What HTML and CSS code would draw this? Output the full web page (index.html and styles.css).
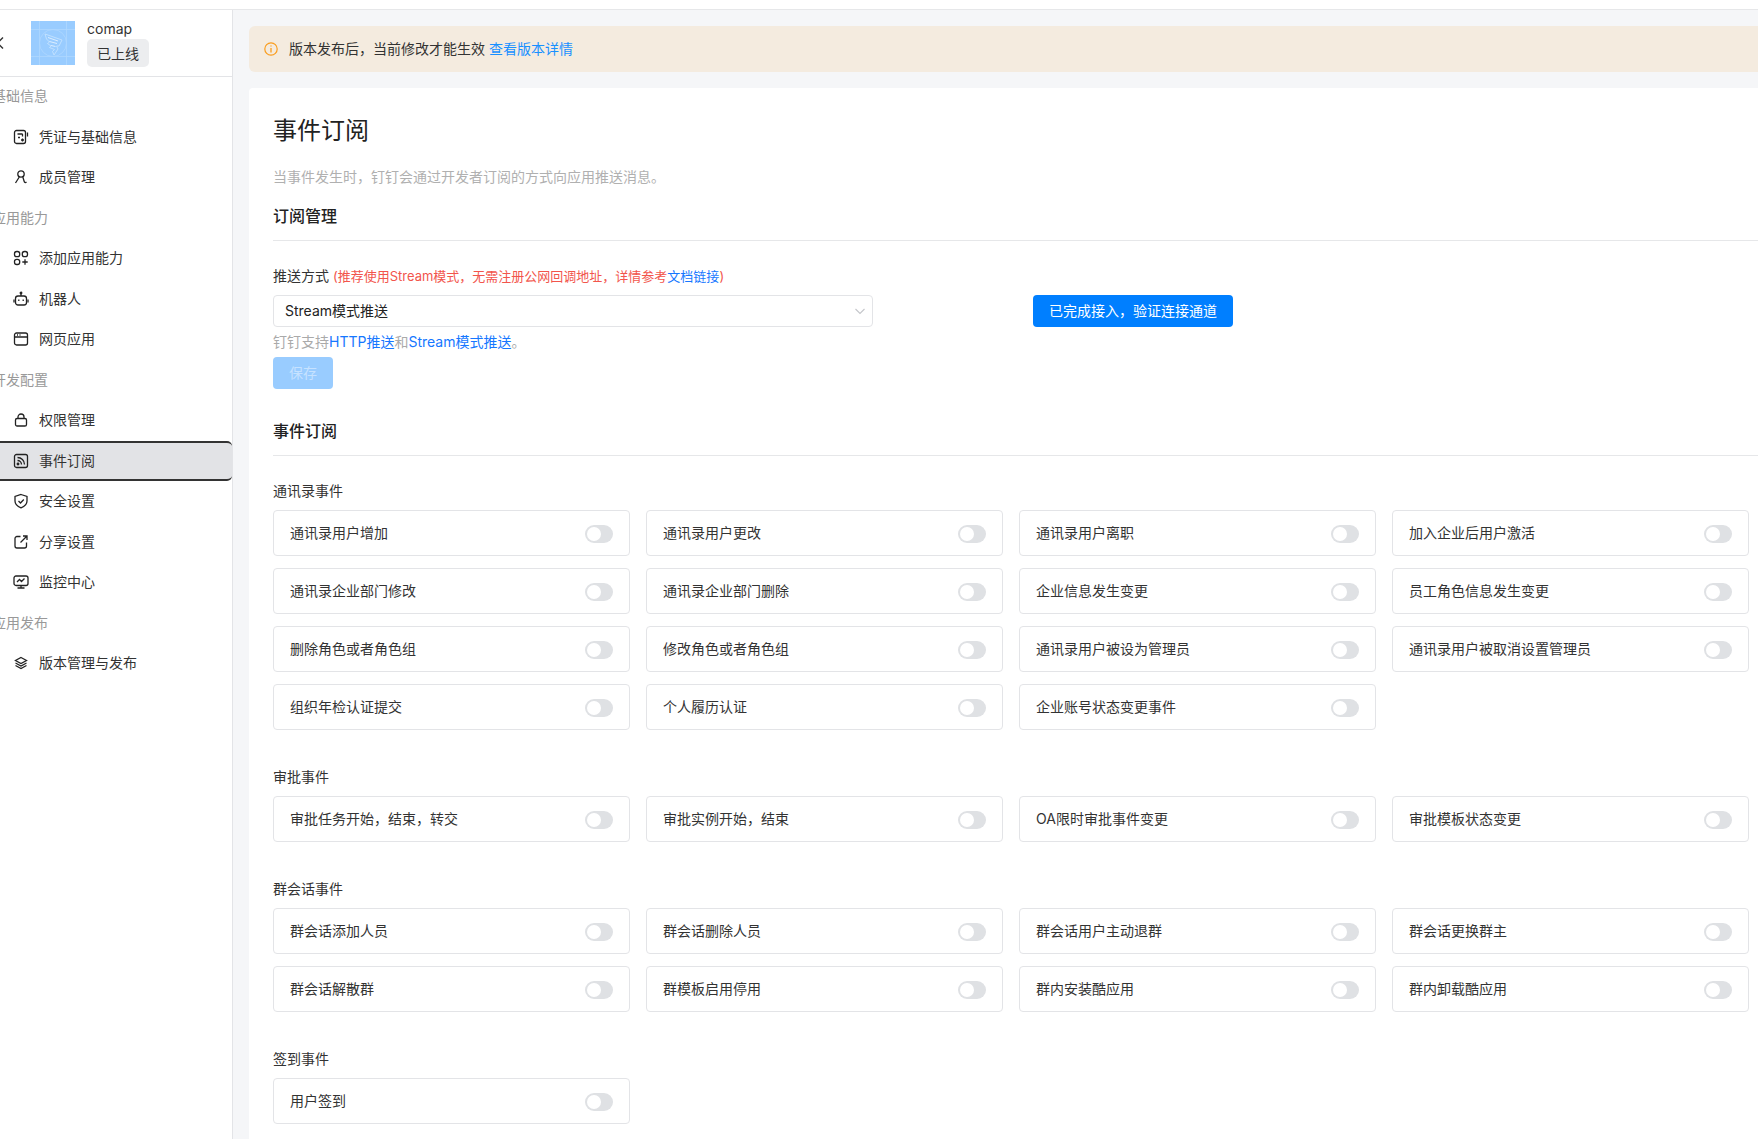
FILE: index.html
```html
<!DOCTYPE html>
<html lang="zh-CN">
<head>
<meta charset="utf-8">
<title>事件订阅</title>
<link rel="stylesheet" href="styles.css">
</head>
<body>
<div class="topbar"></div>
<div class="layout">
  <aside class="sidebar">
    <div class="app-head">
      <svg class="back" width="12" height="14" viewBox="0 0 12 14"><path d="M9 1.500 3.500 7 9 12.500" fill="none" stroke="#333" stroke-width="1.400"/></svg>
      <svg class="logo" width="44" height="44" viewBox="0 0 44 44">
        <rect width="44" height="44" fill="#99ccff"/>
        <path d="M0 8.500H44M0 35.500H44M8.500 0V44M35.500 0V44" stroke="#aed7ff" stroke-width=".8"/>
        <circle cx="22" cy="22" r="13.500" fill="none" stroke="#aed7ff" stroke-width=".8"/>
        <path d="M14 13 31 19 28 25 25.500 25 27 28 23 34 21.500 30.500 23.500 28.500 18.500 26.500 20 25 16.500 22.500 18.500 21 15.500 18Z" fill="none" stroke="#c4e2ff" stroke-width=".9"/>
        <path d="M17 16.500 27 20M18.500 20.500 26 22.500M20 24.500 24.500 25.500" fill="none" stroke="#dceeff" stroke-width="1"/>
      </svg>
      <div class="app-meta">
        <div class="app-name">comap</div>
        <span class="badge">已上线</span>
      </div>
    </div>
    <nav class="menu">
      <div class="menu-label">基础信息</div>
      <a class="menu-item"><svg class="ico" viewBox="0 0 16 16"><rect x="1.500" y="1.500" width="11" height="13" rx="2"/><path d="M14.500 3.500v4M4.500 5h4.500l.5.500v2M5 8.500h2M9.500 9.500v3M8 11h3"/></svg>凭证与基础信息</a>
      <a class="menu-item"><svg class="ico" viewBox="0 0 16 16"><circle cx="8" cy="5" r="3.200"/><path d="M6.300 8 2.500 14M9.800 8l1.500 4.800c.3.900 1.300 1 2.200.2"/></svg>成员管理</a>
      <div class="menu-label">应用能力</div>
      <a class="menu-item"><svg class="ico" viewBox="0 0 16 16"><rect x="1.500" y="1.500" width="5.200" height="5.200" rx="2.200"/><rect x="9.300" y="1.500" width="5.200" height="5.200" rx="2.200"/><rect x="1.500" y="9.300" width="5.200" height="5.200" rx="2.200"/><path d="M12 9.300v5.400M9.300 12h5.400"/></svg>添加应用能力</a>
      <a class="menu-item"><svg class="ico" viewBox="0 0 16 16"><rect x="2.500" y="5" width="11" height="9" rx="2.500"/><path d="M8 5V2.500M1 8.500v3M15 8.500v3"/><circle cx="8" cy="2" r=".8"/><path d="M5.800 8.500v1.500M10.200 8.500v1.500"/></svg>机器人</a>
      <a class="menu-item"><svg class="ico" viewBox="0 0 16 16"><rect x="1.500" y="2" width="13" height="12" rx="2"/><path d="M1.500 6h13M4 4h1M6.500 4h1"/></svg>网页应用</a>
      <div class="menu-label">开发配置</div>
      <a class="menu-item"><svg class="ico" viewBox="0 0 16 16"><rect x="2.500" y="6.500" width="11" height="7.500" rx="1.600"/><path d="M5 6.500V5a3 3 0 0 1 6 0v1.500"/></svg>权限管理</a>
      <a class="menu-item active"><svg class="ico" viewBox="0 0 16 16"><rect x="1.500" y="1.500" width="13" height="13" rx="2"/><path d="M4.500 4.500a7 7 0 0 1 7 7M4.500 7.500a4 4 0 0 1 4 4"/><circle cx="5" cy="11" r=".8"/></svg>事件订阅</a>
      <a class="menu-item"><svg class="ico" viewBox="0 0 16 16"><path d="M8 1.500 14 3.500V8c0 3.500-2.500 5.500-6 6.800C4.500 13.500 2 11.500 2 8V3.500Z"/><path d="M5.500 8 7.500 10 10.800 6.500"/></svg>安全设置</a>
      <a class="menu-item"><svg class="ico" viewBox="0 0 16 16"><path d="M7.500 2.500H4a2 2 0 0 0-2 2V12a2 2 0 0 0 2 2h7.500a2 2 0 0 0 2-2V8.500"/><path d="M7.500 8.500 14 2M10 2h4v4"/></svg>分享设置</a>
      <a class="menu-item"><svg class="ico" viewBox="0 0 16 16"><rect x="1" y="2" width="14" height="9.500" rx="2"/><path d="M4 8 6.500 5.500 8.500 7.500 11.500 4.500M8 11.500v2.500M4.500 14h7"/></svg>监控中心</a>
      <div class="menu-label">应用发布</div>
      <a class="menu-item"><svg class="ico" viewBox="0 0 16 16"><path d="M8 2.500 13.500 5.500 8 8.500 2.500 5.500Z"/><path d="M2.500 8 8 11 13.500 8M2.500 10.500 8 13.500 13.500 10.500"/></svg>版本管理与发布</a>
    </nav>
  </aside>
  <main class="main">
    <div class="alert">
      <svg class="alert-ico" width="14" height="14" viewBox="0 0 14 14"><circle cx="7" cy="7" r="6.200" fill="none" stroke="#fa9d1e" stroke-width="1.200"/><path d="M7 3.500v.9M7 6v4.500" stroke="#fa9d1e" stroke-width="1.300" fill="none"/></svg>
      <span>版本发布后，当前修改才能生效</span>
      <a class="alert-link">查看版本详情</a>
    </div>
    <section class="panel">
      <h1 class="page-title">事件订阅</h1>
      <p class="page-desc">当事件发生时，钉钉会通过开发者订阅的方式向应用推送消息。</p>
      <h2 class="section-title first">订阅管理</h2>
      <div class="form-label">推送方式 <span class="hint">(推荐使用Stream模式，无需注册公网回调地址，详情参考<a class="link">文档链接</a>)</span></div>
      <div class="form-row">
        <div class="select">
          <span>Stream模式推送</span>
          <svg width="12" height="12" viewBox="0 0 12 12"><path d="M1.500 4 6 8.500 10.500 4" fill="none" stroke="#c4c6ca" stroke-width="1.100"/></svg>
        </div>
        <button class="btn-primary">已完成接入，验证连接通道</button>
      </div>
      <div class="help">钉钉支持<a class="link">HTTP推送</a>和<a class="link">Stream模式推送</a>。</div>
      <button class="btn-save">保存</button>
      <h2 class="section-title">事件订阅</h2>

      <div class="group">
        <div class="group-title">通讯录事件</div>
        <div class="event-grid">
          <div class="event"><span>通讯录用户增加</span><i class="toggle"></i></div>
          <div class="event"><span>通讯录用户更改</span><i class="toggle"></i></div>
          <div class="event"><span>通讯录用户离职</span><i class="toggle"></i></div>
          <div class="event"><span>加入企业后用户激活</span><i class="toggle"></i></div>
          <div class="event"><span>通讯录企业部门修改</span><i class="toggle"></i></div>
          <div class="event"><span>通讯录企业部门删除</span><i class="toggle"></i></div>
          <div class="event"><span>企业信息发生变更</span><i class="toggle"></i></div>
          <div class="event"><span>员工角色信息发生变更</span><i class="toggle"></i></div>
          <div class="event"><span>删除角色或者角色组</span><i class="toggle"></i></div>
          <div class="event"><span>修改角色或者角色组</span><i class="toggle"></i></div>
          <div class="event"><span>通讯录用户被设为管理员</span><i class="toggle"></i></div>
          <div class="event"><span>通讯录用户被取消设置管理员</span><i class="toggle"></i></div>
          <div class="event"><span>组织年检认证提交</span><i class="toggle"></i></div>
          <div class="event"><span>个人履历认证</span><i class="toggle"></i></div>
          <div class="event"><span>企业账号状态变更事件</span><i class="toggle"></i></div>
        </div>
      </div>

      <div class="group">
        <div class="group-title">审批事件</div>
        <div class="event-grid">
          <div class="event"><span>审批任务开始，结束，转交</span><i class="toggle"></i></div>
          <div class="event"><span>审批实例开始，结束</span><i class="toggle"></i></div>
          <div class="event"><span>OA限时审批事件变更</span><i class="toggle"></i></div>
          <div class="event"><span>审批模板状态变更</span><i class="toggle"></i></div>
        </div>
      </div>

      <div class="group">
        <div class="group-title">群会话事件</div>
        <div class="event-grid">
          <div class="event"><span>群会话添加人员</span><i class="toggle"></i></div>
          <div class="event"><span>群会话删除人员</span><i class="toggle"></i></div>
          <div class="event"><span>群会话用户主动退群</span><i class="toggle"></i></div>
          <div class="event"><span>群会话更换群主</span><i class="toggle"></i></div>
          <div class="event"><span>群会话解散群</span><i class="toggle"></i></div>
          <div class="event"><span>群模板启用停用</span><i class="toggle"></i></div>
          <div class="event"><span>群内安装酷应用</span><i class="toggle"></i></div>
          <div class="event"><span>群内卸载酷应用</span><i class="toggle"></i></div>
        </div>
      </div>

      <div class="group">
        <div class="group-title">签到事件</div>
        <div class="event-grid">
          <div class="event"><span>用户签到</span><i class="toggle"></i></div>
        </div>
      </div>
    </section>
  </main>
</div>
</body>
</html>
```
FILE: styles.css
```css
* { box-sizing: border-box; }
html, body { margin: 0; height: 100%; overflow: hidden; }
body {
  font-family: Inter, "Noto Sans CJK SC", sans-serif;
  font-size: 14px;
  line-height: 22px;
  color: #333;
  background: #f5f6f8;
}
a { color: inherit; text-decoration: none; }

.topbar { height: 10px; background: #fff; border-bottom: 1px solid #e6e7e9; }
.layout { display: flex; height: 1129px; }

.sidebar { width: 233px; flex: none; background: #fff; border-right: 1px solid #e3e4e7; overflow: hidden; }
.app-head { height: 67px; display: flex; align-items: flex-start; padding-top: 11px; border-bottom: 1px solid #e3e4e7; }
.back { margin: 15px 0 0 -6px; flex: none; }
.logo { margin-left: 25px; flex: none; }
.app-meta { margin: -3px 0 0 12px; }
.app-name { height: 22px; }
.badge { display: block; width: 62px; height: 28px; line-height: 29px; text-align: center; background: #ecedef; border-radius: 5px; margin-top: -1px; }

.menu { margin-top: -1px; }
.menu-label, .menu-item { height: 40.5px; display: flex; align-items: center; }
.menu-label { margin-left: -8px; color: #999; }
.menu-item { padding-left: 13px; color: #333; }
.menu-item.active { background: #e2e3e6; border-top: 2px solid #333; border-bottom: 2px solid #333; border-radius: 0 5px 5px 0; height: 39.5px; margin: .5px 0; }
.ico { width: 16px; height: 16px; margin-right: 10px; flex: none; fill: none; stroke: #222; stroke-width: 1.300; }

.main { flex: 1; min-width: 0; padding: 16px 0 0 16px; overflow: hidden; }
.alert { height: 46px; display: flex; align-items: center; background: #f4ebdf; border-radius: 6px 0 0 6px; padding-left: 15px; }
.alert-ico { margin-right: 11px; flex: none; }
.alert-link { margin-left: 4px; color: #1890ff; }

.panel { margin-top: 16px; background: #fff; padding: 27px 0 40px 24px; min-height: 1100px; border-radius: 4px 0 0 0; }
.page-title { margin: 0; font-size: 24px; line-height: 32px; font-weight: 400; color: #222; }
.page-desc { margin: 19px 0 0; color: #b0b0b0; }
.section-title { margin: 0; font-size: 16px; line-height: 24px; font-weight: 500; color: #222; padding-bottom: 12px; border-bottom: 1px solid #e6e7e9; margin-top: 30px; }
.section-title.first { margin-top: 16px; }

.form-label { margin-top: 24px; }
.hint { font-size: 13px; color: #f2554c; }
.link { color: #1677ff; }
.form-row { display: flex; gap: 160px; margin-top: 8px; }
.select { width: 600px; height: 32px; border: 1px solid #e3e4e7; border-radius: 4px; padding: 0 6px 0 11px; display: flex; align-items: center; justify-content: space-between; color: #222; }
.btn-primary, .btn-save { border: 0; font: inherit; border-radius: 4px; padding: 0; display: block; }
.btn-primary { width: 200px; height: 32px; background: #007fff; color: #fff; }
.help { margin-top: 4px; color: #aaa; }
.btn-save { margin-top: 4px; width: 60px; height: 32px; background: #99ccff; color: #c6e2ff; }

.group { margin-top: 36px; }
.section-title + .group { margin-top: 24px; }
.group-title { margin-bottom: 8px; }
.event-grid { display: grid; grid-template-columns: repeat(4, 357px); gap: 12px 16px; }
.event { height: 46px; border: 1px solid #e3e4e7; border-radius: 4px; padding: 0 16px; display: flex; align-items: center; justify-content: space-between; }
.toggle { display: block; position: relative; width: 28px; height: 18px; border-radius: 9px; background: #dfe1e4; margin-top: 1px; }
.toggle::after { content: ""; position: absolute; left: 2px; top: 2px; width: 14px; height: 14px; border-radius: 50%; background: #fff; }
```
